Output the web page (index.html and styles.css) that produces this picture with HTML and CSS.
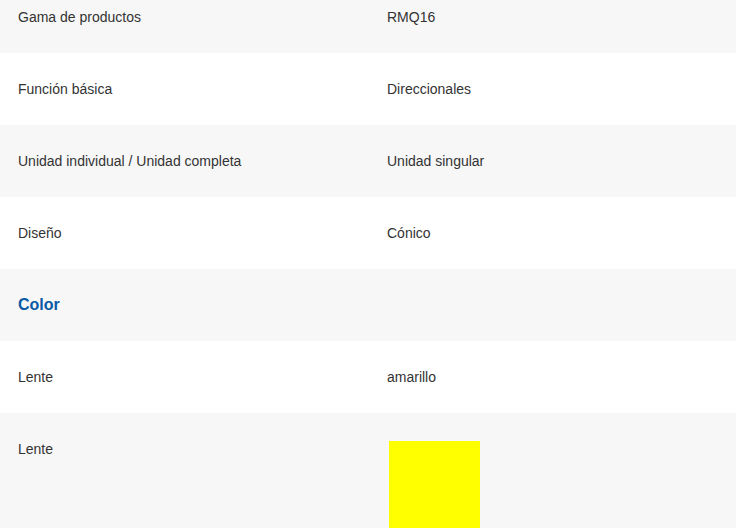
FILE: index.html
```html
<!DOCTYPE html>
<html lang="es">
<head>
<meta charset="utf-8">
<link rel="stylesheet" href="styles.css">
</head>
<body>
<div class="specs">
  <div class="row gray"><div class="cell">Gama de productos</div><div class="cell">RMQ16</div></div>
  <div class="row"><div class="cell">Función básica</div><div class="cell">Direccionales</div></div>
  <div class="row gray"><div class="cell">Unidad individual / Unidad completa</div><div class="cell">Unidad singular</div></div>
  <div class="row"><div class="cell">Diseño</div><div class="cell">Cónico</div></div>
  <div class="row gray"><div class="cell heading">Color</div><div class="cell"></div></div>
  <div class="row"><div class="cell">Lente</div><div class="cell">amarillo</div></div>
  <div class="row gray"><div class="cell">Lente</div><div class="cell"><div class="swatch"></div></div></div>
</div>
</body>
</html>
```
FILE: styles.css
```css
html, body {
  margin: 0;
  padding: 0;
  background: #fff;
  overflow: hidden;
}
body {
  font-family: "Liberation Sans", Arial, sans-serif;
  font-size: 14px;
  color: #333;
}
.specs {
  margin-top: -19px;
}
.row {
  display: grid;
  grid-template-columns: 369px 1fr;
  background: #fff;
}
.row.gray {
  background: #f7f7f7;
}
.cell {
  padding: 28px 18px;
  line-height: 16px;
}
.heading {
  font-size: 16px;
  font-weight: bold;
  color: #0b5aa6;
}
.swatch {
  width: 91px;
  height: 100px;
  margin-left: 2px;
  background: #ffff00;
}
```
